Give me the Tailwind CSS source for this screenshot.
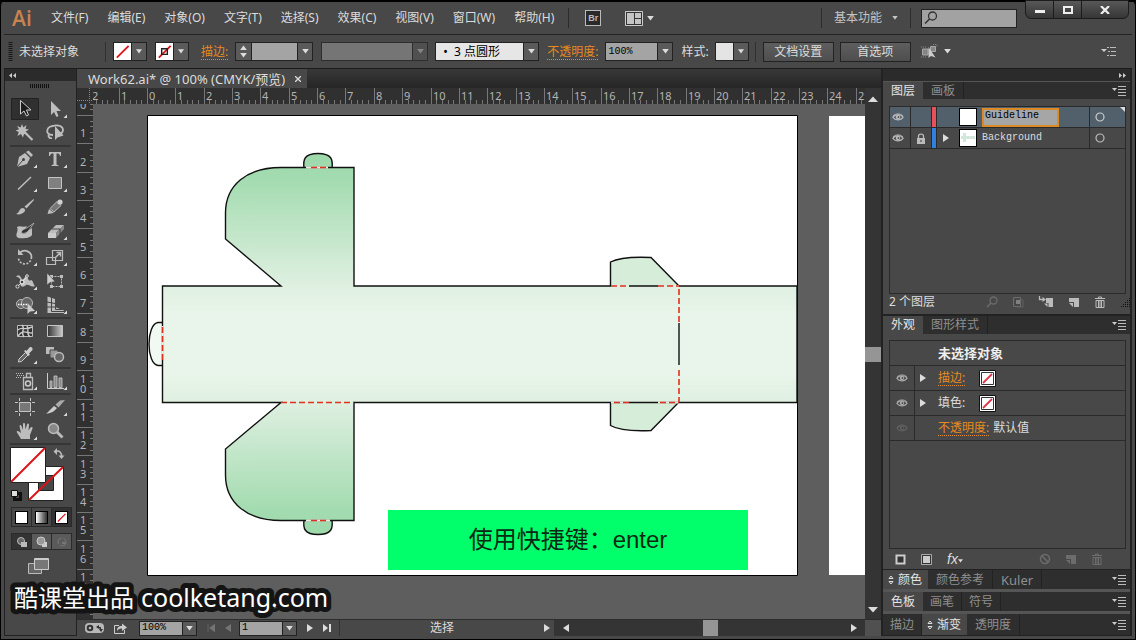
<!DOCTYPE html>
<html lang="zh-CN">
<head>
  <meta charset="UTF-8">
  <meta name="viewport" content="width=device-width, initial-scale=1.0">
  <title>Work62.ai</title>
  <script src="https://cdn.jsdelivr.net/npm/@tailwindcss/browser@4"></script>
</head>
<body class="h-screen overflow-hidden bg-black text-[12px] leading-4 text-[#dcdcdc] font-['Noto_Sans','Noto_Sans_CJK_SC',sans-serif]">

  <!-- Shared icons -->
  <svg class="hidden">
    <symbol id="down" viewBox="0 0 8 6"><path d="M0 0H8L4 5.5Z" fill="currentColor"/></symbol>
    <symbol id="none" viewBox="0 0 18 18"><path d="M0 0H18V18H0Z" fill="#fff"/><path d="M3 15.5L15.5 3" stroke="#e0141a" stroke-width="2"/></symbol>
    <symbol id="none-small" viewBox="0 0 17 17"><path d="M.5.5H16.5V16.5H.5Z" fill="#fff" stroke="#111"/><path d="M2.5 2.5H14.5V14.5H2.5Z" fill="#fff" stroke="#333"/><path d="M4 13L13 4" stroke="#e0344a" stroke-width="1.8"/></symbol>
    <symbol id="eye" viewBox="0 0 14 10"><path d="M1 5.5C3 1.5 10.500 1 13 5.500C10.500 9 4 9.500 1 5.500Z" fill="none" stroke="currentColor" stroke-width="1.300"/><circle cx="7" cy="5" r="2.600" fill="currentColor"/><circle cx="7.500" cy="5" r="1" fill="#333"/><path d="M1 4C4 .5 10 .5 13 4" fill="none" stroke="currentColor" stroke-width="1"/></symbol>
    <symbol id="menu" viewBox="0 0 14 10"><path d="M0 2H5L2.500 5Z" fill="#ccc"/><path d="M6 .5H14M6 3.500H14M6 6.500H14M6 9.500H14" stroke="#bbb"/></symbol>
    <symbol id="corner" viewBox="0 0 30 24"><path d="M27 17.500V21H23.500Z" fill="#ddd"/></symbol>
    <symbol id="right" viewBox="0 0 6 8"><path d="M0 0L6 4L0 8Z" fill="currentColor"/></symbol>
    <symbol id="page" viewBox="0 0 12 12"><path d="M1 2H11V11H6V6H1Z" fill="currentColor"/><path d="M1 7H5V11Z" fill="currentColor"/></symbol>
    <symbol id="trash" viewBox="0 0 12 12"><path d="M4.500 2V1H7.500V2M1 2.500H11M2 4.500H10V11.500H2ZM4.500 5V11M7.500 5V11M6 5V11" fill="none" stroke="currentColor"/></symbol>
    <symbol id="updown" viewBox="0 0 6 10"><path d="M1 3.500L3 1L5 3.500M1 6.500L3 9L5 6.500M1 3.500H5M1 6.500H5" fill="none" stroke="#ddd"/></symbol>
  </svg>

  <div class="flex h-full flex-col rounded-t-md bg-[#484848] border-x border-b border-black">

    <!-- Menu bar -->
    <header class="flex h-[34px] shrink-0 items-center border-t-2 border-black pl-[11px] pr-1.5">
      <h1 class="w-[39px] text-[21px] leading-7 font-semibold text-[#c98250] font-['Open_Sans',sans-serif]">Ai</h1>
      <nav class="flex gap-[19px] whitespace-nowrap">
        <a href="#">文件(F)</a>
        <a href="#">编辑(E)</a>
        <a href="#">对象(O)</a>
        <a href="#">文字(T)</a>
        <a href="#">选择(S)</a>
        <a href="#">效果(C)</a>
        <a href="#">视图(V)</a>
        <a href="#">窗口(W)</a>
        <a href="#">帮助(H)</a>
      </nav>
      <div class="ml-3.5 h-5 border-l border-[#2c2c2c]"></div>
      <button class="ml-4 h-4 w-4 border border-[#bbb] bg-[#2a2a2a] text-[9px] leading-3 font-bold text-[#bbb] font-['Liberation_Sans',sans-serif]">Br</button>
      <button class="ml-6 flex items-center gap-1" aria-label="排列文档">
        <svg class="h-[15px] w-[18px]" viewBox="0 0 18 15"><path d="M.5.5H17.500V14.500H.5Z" fill="#333" stroke="#ccc"/><path d="M2 2H9V13H2ZM10 2H16V7H10ZM10 8H16V13H10Z" fill="#c4c4c4"/></svg>
        <svg class="h-[5px] w-[7px]"><use href="#down"/></svg>
      </button>
      <div class="ml-auto h-5 border-l border-[#2c2c2c]"></div>
      <button class="ml-3 flex items-center gap-2.5 text-[#c4c4c4]">基本功能 <svg class="h-1 w-1.5"><use href="#down"/></svg></button>
      <div class="ml-3 h-5 border-l border-[#2c2c2c]"></div>
      <label class="ml-2.5 flex h-[19px] w-24 items-center border border-[#222] bg-[#a2a2a2] px-0.5">
        <svg class="h-[14px] w-[14px] shrink-0" viewBox="0 0 14 14"><circle cx="8.500" cy="5" r="4" fill="none" stroke="#333" stroke-width="1.300"/><path d="M5.500 8L1 12.500" stroke="#333" stroke-width="1.600"/></svg>
        <input class="w-full min-w-0 outline-none" type="search" aria-label="搜索">
      </label>
      <div class="ml-2 flex h-[19px] self-start -mt-0.5 divide-x divide-[#1c1c1c] rounded-b-md border border-[#1c1c1c] bg-linear-to-b from-[#585858] to-[#363636]">
        <button class="flex w-7 items-center justify-center" aria-label="最小化"><span class="mt-1 h-[3px] w-2.5 bg-[#eee]"></span></button>
        <button class="flex w-7 items-center justify-center" aria-label="最大化"><span class="h-2 w-2.5 border-2 border-[#eee]"></span></button>
        <button class="flex w-[46px] items-center justify-center" aria-label="关闭"><svg class="h-2 w-2.5" viewBox="0 0 10 8"><path d="M1 0L9 8M9 0L1 8" stroke="#eee" stroke-width="2.200"/></svg></button>
      </div>
    </header>

    <!-- Control bar -->
    <section class="mx-[3px] flex h-[34px] shrink-0 items-center border-t border-[#222] whitespace-nowrap">
      <svg class="ml-1 h-5 w-[5px]" viewBox="0 0 5 20"><path d="M2.500 0V20" stroke="#181818" stroke-width="4" stroke-dasharray="1 1"/></svg>
      <span class="ml-1.5 w-[86px]">未选择对象</span>
      <div class="h-5 border-l border-[#303030]"></div>
      <button class="ml-[7px] flex h-[19px] items-center border border-[#222] bg-[#5a5a5a]" aria-label="填色">
        <svg class="h-[17px] w-[18px] border-r border-[#222]"><use href="#none"/></svg>
        <svg class="mx-1 h-[5px] w-1.5"><use href="#down"/></svg>
      </button>
      <button class="ml-2 flex h-[19px] items-center border border-[#222] bg-[#5a5a5a]" aria-label="描边颜色">
        <svg class="h-[17px] w-[18px] border-r border-[#222]" viewBox="0 0 18 18"><use href="#none"/><path d="M6 6H12V12H6Z" fill="none" stroke="#222" stroke-width="1.500"/></svg>
        <svg class="mx-1 h-[5px] w-1.5"><use href="#down"/></svg>
      </button>
      <label for="stroke" class="ml-3 border-b border-dotted border-[#e78a1f] text-[#e78a1f] leading-[15px]">描边:</label>
      <div class="ml-[7px] flex h-[19px] w-[78px] border border-[#222] bg-[#5a5a5a]">
        <div class="flex w-4 flex-col items-center justify-around border-r border-[#222]">
          <button aria-label="增加"><svg class="h-[5px] w-[7px] rotate-180"><use href="#down"/></svg></button>
          <button aria-label="减少"><svg class="h-[5px] w-[7px]"><use href="#down"/></svg></button>
        </div>
        <input id="stroke" class="w-0 min-w-0 flex-1 bg-[#a4a4a4]">
        <button class="flex w-[15px] items-center justify-center border-l border-[#222]" aria-label="描边粗细"><svg class="h-[5px] w-[7px]"><use href="#down"/></svg></button>
      </div>
      <div class="ml-2 flex h-[19px] w-[107px] border border-[#2e2e2e] bg-[#505050]">
        <input class="w-0 min-w-0 flex-1 bg-[#757575]" aria-label="画笔定义" disabled>
        <button class="flex w-[15px] items-center justify-center border-l border-[#2e2e2e] text-[#858585]" aria-label="画笔列表" disabled><svg class="h-[5px] w-[7px]"><use href="#down"/></svg></button>
      </div>
      <div class="ml-[7px] flex h-[19px] w-[104px] border border-[#222] bg-[#5a5a5a]">
        <select class="w-0 min-w-0 flex-1 appearance-none bg-[#e6e6e6] pl-[7px] text-black" aria-label="画笔"><option>•&nbsp; 3 点圆形</option></select>
        <span class="flex w-[15px] items-center justify-center border-l border-[#222]"><svg class="h-[5px] w-[7px]"><use href="#down"/></svg></span>
      </div>
      <label for="opacity" class="ml-2 border-b border-dotted border-[#e78a1f] text-[#e78a1f] leading-[15px]">不透明度:</label>
      <div class="ml-[7px] flex h-[19px] w-[68px] border border-[#222] bg-[#5a5a5a]">
        <input id="opacity" value="100%" class="w-0 min-w-0 flex-1 bg-[#a4a4a4] pl-0.5 text-[10px] text-black font-['Liberation_Mono',monospace]">
        <button class="flex w-[15px] items-center justify-center border-l border-[#222]" aria-label="不透明度列表"><svg class="h-[5px] w-[7px]"><use href="#down"/></svg></button>
      </div>
      <span class="ml-2">样式:</span>
      <button class="ml-1.5 flex h-[19px] items-center border border-[#222] bg-[#5a5a5a]" aria-label="样式">
        <span class="h-[17px] w-[18px] border-r border-[#222] bg-[#e4e4e4]"></span>
        <svg class="mx-1 h-[5px] w-1.5"><use href="#down"/></svg>
      </button>
      <div class="ml-1.5 h-5 border-l border-[#303030]"></div>
      <button class="ml-[7px] h-5 w-[71px] border border-[#222] bg-linear-to-b from-[#5e5e5e] to-[#4e4e4e]">文档设置</button>
      <button class="ml-1.5 h-5 w-[71px] border border-[#222] bg-linear-to-b from-[#5e5e5e] to-[#4e4e4e]">首选项</button>
      <button class="ml-2.5 flex items-center gap-1.5" aria-label="选择类似的对象">
        <svg class="h-4 w-[17px]" viewBox="0 0 17 16"><path d="M1.500 5H7V11H1.500ZM9.500 2.500H14.500V7.500H9.500Z" fill="#858585" stroke="#a8a8a8"/><path d="M0 3H5M0 13H5M12 .5H16V3" stroke="#888" stroke-dasharray="1 1" fill="none"/><path d="M7.500 3V14L10 12L14.500 13.500Z" fill="#ccc"/></svg>
        <svg class="h-[5px] w-[7px]"><use href="#down"/></svg>
      </button>
      <button class="ml-auto mr-4" aria-label="控制栏菜单"><svg class="h-[9px] w-[15px]" viewBox="0 0 15 9"><path d="M0 2H6L3 5Z" fill="#ccc"/><path d="M6 .5H8M9 .5H15M7 4.500H9M10 4.500H15M6 8.500H8M9 8.500H15" stroke="#bbb"/></svg></button>
    </section>

    <main class="mx-[3px] mb-[3px] flex min-h-0 flex-1 border-t border-[#1c1c1c]">

      <!-- Tool panel -->
      <aside class="flex w-[73px] shrink-0 flex-col border-x border-b border-[#222]">
        <div class="flex h-3 shrink-0 items-center bg-[#2b2b2b] pl-1"><svg class="h-[5px] w-[7px]" viewBox="0 0 7 5"><path d="M3 0V5L0 2.500ZM7 0V5L4 2.500Z" fill="#ccc"/></svg></div>
        <svg class="mt-[3px] ml-[25px] h-1 w-5 shrink-0" viewBox="0 0 20 4"><path d="M0 2H20" stroke="#111" stroke-width="4" stroke-dasharray="1 1"/></svg>
        <div class="mt-[9px] flex flex-col px-[5px] text-[#bdbdbd] [&_svg]:h-6 [&_svg]:w-[30px]">
          <div class="grid grid-cols-[30px_30px] border-b-2 border-[#363636]">
            <button class="h-6" aria-label="选择工具"><svg viewBox="0 0 30 24"><path d="M1.500 1.500H28.500V22.500H1.500Z" fill="#303030" stroke="#222"/><path d="M10.500 3.500V17L14 14L16.500 19L18.500 18L16.500 13L21 13Z" fill="#1c1c1c" stroke="#ccc"/></svg></button>
            <button class="h-6" aria-label="直接选择工具"><svg viewBox="0 0 30 24"><path d="M11 4V18L14 15L16.500 20L18.500 19L16.500 14H21Z" fill="currentColor"/><use href="#corner"/></svg></button>
            <button class="h-6" aria-label="魔棒工具"><svg viewBox="0 0 30 24"><path d="M12 3L13.300 6.500L16.500 4L15.500 8L19 8.500L15.800 10.500L18 13.500L14 13L13 16.500L11 13L7.500 15L8.700 11L5.500 9.500L9 8.300L7 5L10.700 6.500Z" fill="currentColor"/><path d="M16 12.500L22.500 19" stroke="currentColor" stroke-width="2.200"/></svg></button>
            <button class="h-6" aria-label="套索工具"><svg viewBox="0 0 30 24"><path d="M13 14C8 14 6.500 11.500 7.500 8.500C9 4 20 3 22.500 7C24 10 22 12 20 13M10 13C7 14 9 18 12 17" fill="none" stroke="currentColor" stroke-width="1.800"/><path d="M15 5V19L17.500 16.500L23.500 14.500Z" fill="currentColor"/></svg></button>
          </div>
          <div class="grid grid-cols-[30px_30px] border-b-2 border-[#363636]">
            <button class="h-6" aria-label="钢笔工具"><svg viewBox="0 0 30 24"><path d="M7 20L9 10L15 6L20 11L17 17Z" fill="currentColor"/><path d="M16 5L18.500 3.500L23 8L21 10Z" fill="currentColor"/><path d="M7 20L13 13" stroke="#444"/><circle cx="13.500" cy="12.500" r="1.500" fill="#444"/><use href="#corner"/></svg></button>
            <button class="h-6" aria-label="文字工具"><svg viewBox="0 0 30 24"><path d="M9 5H21V9H20C19.500 7 19 6.500 16.500 6.500V17C16.500 18 17 18 18.500 18.300V19H11.500V18.300C13 18 13.500 18 13.500 17V6.500C11 6.500 10.500 7 10 9H9Z" fill="currentColor"/><use href="#corner"/></svg></button>
            <button class="h-6" aria-label="直线段工具"><svg viewBox="0 0 30 24"><path d="M8 18.500L21 6" stroke="currentColor" stroke-width="1.500"/><use href="#corner"/></svg></button>
            <button class="h-6" aria-label="矩形工具"><svg viewBox="0 0 30 24"><path d="M8.500 6.500H21.500V17.500H8.500Z" fill="#808080" stroke="#c4c4c4"/><use href="#corner"/></svg></button>
            <button class="h-6" aria-label="画笔工具"><svg viewBox="0 0 30 24"><path d="M14.500 11.500L23.500 4L24 5L16.500 13.500Z" fill="currentColor"/><path d="M6 19C9 18 9 15 11 13.500C13 12 16 14 15 16C13 19 9 20 6 19Z" fill="currentColor"/></svg></button>
            <button class="h-6" aria-label="铅笔工具"><svg viewBox="0 0 30 24"><path d="M7.500 19L9 14L14 18Z" fill="currentColor"/><path d="M10 13.500L17 6.500L21 10.500L14 17Z" fill="#777" stroke="#bbb"/><circle cx="20" cy="7" r="2.600" fill="#d0d0d0"/><use href="#corner"/></svg></button>
            <button class="h-6" aria-label="斑点画笔工具"><svg viewBox="0 0 30 24"><path d="M7 8C10 6 13 9 17 7L14 12C11 15 15 16 18 12L22 9V16C20 20 8 20 7 18C5 14 9 13 7 8Z" fill="currentColor"/><path d="M11 14C12 10 15 10 17 9L24 4L19 11C17 14 14 15 11 14Z" fill="#333" stroke="#bbb" stroke-width=".8"/></svg></button>
            <button class="h-6" aria-label="橡皮擦工具"><svg viewBox="0 0 30 24"><path d="M8 14L16 6H24L16 14Z" fill="#bbb"/><path d="M8 14H16V19H8Z" fill="#ccc"/><path d="M16 14L24 6V10L16 19Z" fill="#888"/><path d="M12 10H20L20 15" fill="none" stroke="#444"/><use href="#corner"/></svg></button>
          </div>
          <div class="grid grid-cols-[30px_30px] border-b-2 border-[#363636]">
            <button class="h-6" aria-label="旋转工具"><svg viewBox="0 0 30 24"><path d="M10 7.500C15 3.500 21.500 7 21.500 12" fill="none" stroke="currentColor" stroke-width="1.700"/><path d="M21.500 12C21 21 9 21 8.500 13" fill="none" stroke="currentColor" stroke-width="1.700" stroke-dasharray="2 1.500"/><path d="M8 4V10H13.500Z" fill="currentColor"/><use href="#corner"/></svg></button>
            <button class="h-6" aria-label="比例缩放工具"><svg viewBox="0 0 30 24"><path d="M12.500 5.500H22.500V15.500H12.500ZM6.500 12.500H15.500V19.500H6.500Z" fill="none" stroke="currentColor" stroke-width="1.200"/><path d="M15.500 12.500L20 8M16.500 7.500H20.500V11.500" fill="none" stroke="currentColor" stroke-width="1.500"/><use href="#corner"/></svg></button>
            <button class="h-6" aria-label="宽度工具"><svg viewBox="0 0 30 24"><path d="M6 8C9 4 11 8 12 11C15 9 16 5 17 7C18 10 19 13 21 11C23 11 23 15 25 17C21 19 19 15 16 16C12 20 9 16 11 13C10 9 9 8 6 8Z" fill="currentColor"/><path d="M7 18L18 7" stroke="#ddd"/><circle cx="7.500" cy="17.500" r="1.600" fill="#444" stroke="#ddd"/><circle cx="12" cy="13" r="2" fill="#444" stroke="#fff"/><circle cx="17" cy="7" r="1.300" fill="#444" stroke="#ddd"/><use href="#corner"/></svg></button>
            <button class="h-6" aria-label="自由变换工具"><svg viewBox="0 0 30 24"><path d="M11.500 7.500H21.500V17.500H11.500Z" fill="none" stroke="currentColor" stroke-dasharray="2 1"/><path d="M10 6H13V9H10ZM20 6H23V9H20ZM20 16H23V19H20ZM10 16H13V19H10Z" fill="currentColor"/><path d="M7 4V16L10 13.500L15 12.500Z" fill="#ccc" stroke="#444" stroke-width=".5"/></svg></button>
            <button class="h-6" aria-label="形状生成器工具"><svg viewBox="0 0 30 24"><circle cx="11" cy="11" r="4.500" fill="#666" stroke="#bbb"/><circle cx="17" cy="10" r="5.500" fill="#666" stroke="#bbb"/><path d="M8 11.500H18" stroke="#fff" stroke-width="1.500" stroke-dasharray="1.500 1"/><path d="M17.500 10V21L20 18.500L25 18Z" fill="#ccc"/><use href="#corner"/></svg></button>
            <button class="h-6" aria-label="透视网格工具"><svg viewBox="0 0 30 24"><path d="M7.500 3.500L15 6V14L24 17.500V20H7.500Z" fill="currentColor"/><path d="M7 9L15 10.500M7 14H15M11.500 4V18.500H24M15.500 14V16.500H22" stroke="#444" fill="none"/><use href="#corner"/></svg></button>
          </div>
          <div class="grid grid-cols-[30px_30px] border-b-2 border-[#363636]">
            <button class="h-6" aria-label="网格工具"><svg viewBox="0 0 30 24"><path d="M7.500 6.500H22.500V17.500H7.500Z" fill="#333" stroke="#bbb"/><path d="M8 11C12 7 14 12 22 8M8 17C13 10 16 14 22 14M12 6C16 10 10 13 14 18M17 7C20 11 15 13 20 18" fill="none" stroke="#ccc" stroke-width="1.400"/></svg></button>
            <button class="h-6" aria-label="渐变工具"><svg viewBox="0 0 30 24"><defs><linearGradient id="g1"><stop stop-color="#333"/><stop offset="1" stop-color="#ccc"/></linearGradient></defs><path d="M7.500 6.500H22.500V17.500H7.500Z" fill="url(#g1)" stroke="#c4c4c4"/></svg></button>
            <button class="h-6" aria-label="吸管工具"><svg viewBox="0 0 30 24"><path d="M8.500 19L9 16L15.500 9.500L18 12L11.500 18.500Z" fill="#666" stroke="#ccc"/><path d="M14 8L18.500 13L20 11.500L19 10.500L22.500 7C23 4.500 21 3.500 19.500 4.500L16.500 8L15.500 7Z" fill="#ccc"/><use href="#corner"/></svg></button>
            <button class="h-6" aria-label="混合工具"><svg viewBox="0 0 30 24"><path d="M6 4H14V11H6Z" fill="#bbb"/><path d="M10 7H18V15H10Z" fill="#999" stroke="#444"/><circle cx="19" cy="14" r="4.500" fill="#666" stroke="#bbb" stroke-width="1.500"/></svg></button>
          </div>
          <div class="grid grid-cols-[30px_30px] border-b-2 border-[#363636]">
            <button class="h-6" aria-label="符号喷枪工具"><svg viewBox="0 0 30 24"><path d="M13.500 8.500H22.500V20.500H13.500ZM16.500 4.500H20.500V8.500H16.500Z" fill="none" stroke="#bbb" stroke-width="1.300"/><circle cx="18" cy="14.500" r="2.500" fill="none" stroke="#ccc" stroke-width="1.500"/><path d="M6 4.500H14M7 6.500H14M6 8.500H12" stroke="#bbb" stroke-dasharray="1 1"/><use href="#corner"/></svg></button>
            <button class="h-6" aria-label="柱形图工具"><svg viewBox="0 0 30 24"><path d="M7.500 4V19.500H24" fill="none" stroke="#ccc"/><path d="M10 12H12V18.500H10ZM14 7H17V18.500H14ZM19 9H22V18.500H19Z" fill="#888" stroke="#ccc" stroke-width=".8"/><use href="#corner"/></svg></button>
          </div>
          <div class="grid grid-cols-[30px_30px] border-b-2 border-[#363636]">
            <button class="h-6" aria-label="画板工具"><svg viewBox="0 0 30 24"><path d="M9.500 7.500H20.500V16.500H9.500Z" fill="#777" stroke="#c4c4c4"/><path d="M9.500 3V6M20.500 3V6M9.500 18V21M20.500 18V21M5 7.500H8M22 7.500H25M5 16.500H8M22 16.500H25" stroke="#c4c4c4"/></svg></button>
            <button class="h-6" aria-label="切片工具"><svg viewBox="0 0 30 24"><path d="M6 19L14 11L17 13C14 17 10 18 6 19Z" fill="#ccc"/><path d="M15.500 9.500L20 5.500L25 5L18.500 12.500Z" fill="#aaa"/><use href="#corner"/></svg></button>
            <button class="h-6" aria-label="抓手工具"><svg viewBox="0 0 30 24"><path d="M11 20L7 13.500C6 12 8 11.500 9 12.500L11 14L9.500 7C9.500 5.500 11 5.500 11.500 7L13 11V5C13 3.500 15 3.500 15 5L15.500 10.500L17 5.500C17.500 4 19 4.500 19 6L18.500 11.500L20.500 8.500C21.500 7.500 23 8 22.500 9.500L20 16V20Z" fill="currentColor"/><use href="#corner"/></svg></button>
            <button class="h-6" aria-label="缩放工具"><svg viewBox="0 0 30 24"><circle cx="13.500" cy="9.500" r="5" fill="#888" stroke="#bbb" stroke-width="1.500"/><path d="M17 13L22.500 18.500" stroke="#bbb" stroke-width="2.800"/></svg></button>
          </div>
        </div>

        <!-- Fill, stroke and drawing modes -->
        <svg class="ml-[5px] h-[58px] w-[60px] shrink-0" viewBox="10 445 60 58">
          <path d="M28.500 466.500H63.500V500.500H28.500Z" fill="#fff" stroke="#222"/><path d="M38.500 475.500H53.500V490.500H38.500Z" fill="#484848" stroke="#222"/><path d="M29 500L63 467" stroke="#d8141a" stroke-width="2"/>
          <path d="M10.500 447.500H45.500V482.500H10.500Z" fill="#fff" stroke="#222"/><path d="M11 482L45 448" stroke="#d8141a" stroke-width="2"/>
          <path d="M55.500 451.500C59 450 62 452 61.500 457" fill="none" stroke="#bbb" stroke-width="1.500"/><path d="M57 448V455L53.500 451.500ZM58.500 455.500H64.500L61.500 459Z" fill="#bbb"/>
          <path d="M14.500 493.500H20.500V499.500H14.500Z" fill="none" stroke="#111" stroke-width="3"/><path d="M11.500 490.500H17.500V496.500H11.500Z" fill="#ddd" stroke="#111"/>
        </svg>
        <div class="mt-1 ml-[6px] flex h-5 w-[61px] shrink-0 divide-x divide-[#2a2a2a] border border-[#2a2a2a]">
          <button class="flex flex-1 items-center justify-center" aria-label="颜色"><span class="h-[13px] w-[13px] border border-black bg-white"></span></button>
          <button class="flex flex-1 items-center justify-center" aria-label="渐变"><span class="h-[13px] w-[13px] border border-black bg-linear-to-r from-white to-[#333]"></span></button>
          <button class="flex flex-1 items-center justify-center bg-[#333]" aria-label="无"><svg class="h-[13px] w-[13px] border border-black"><use href="#none"/></svg></button>
        </div>
        <div class="mt-1.5 ml-[6px] flex h-[17px] w-[61px] shrink-0 divide-x divide-[#2a2a2a] border border-[#2a2a2a] bg-[#5a5a5a] [&_svg]:h-3 [&_svg]:w-3">
          <button class="flex flex-1 items-center justify-center bg-[#333]" aria-label="正常绘图"><svg viewBox="0 0 12 12"><circle cx="5" cy="5" r="3.500" fill="#666" stroke="#bbb"/><path d="M5 6H11V11H5Z" fill="#bbb"/></svg></button>
          <button class="flex flex-1 items-center justify-center" aria-label="背面绘图"><svg viewBox="0 0 12 12"><path d="M6 6H11V11H6Z" fill="#ccc"/><circle cx="5" cy="5" r="4" fill="#999" stroke="#ccc"/></svg></button>
          <button class="flex flex-1 items-center justify-center" aria-label="内部绘图"><svg viewBox="0 0 12 12"><circle cx="6" cy="6" r="4" fill="none" stroke="#777" stroke-dasharray="8 2"/><path d="M6 6H9V8H6Z" fill="#777"/></svg></button>
        </div>
        <button class="mt-2 ml-[23px] h-[17px] w-[21px] shrink-0" aria-label="更改屏幕模式"><svg viewBox="0 0 21 17"><path d="M.5 5.500H13.500V15.500H.5Z" fill="#666" stroke="#bbb"/><path d="M6.500.5H20.500V11.500H6.500Z" fill="#777" stroke="#ccc"/><path d="M6 1.500H21" stroke="#ccc"/></svg></button>
      </aside>

      <!-- Document window -->
      <section class="flex min-w-0 flex-1 flex-col">
        <div class="flex h-[19px] shrink-0 bg-linear-to-b from-[#383838] to-[#262626]">
          <div class="flex w-[230px] items-center justify-between bg-[#484848] pl-[11px] pr-1.5 whitespace-nowrap">
            <span class="text-[13px]">Work62.ai* @ 100% (CMYK/预览)</span>
            <button aria-label="关闭文档"><svg class="h-1.5 w-1.5" viewBox="0 0 6 6"><path d="M0 0L6 6M6 0L0 6" stroke="#ddd" stroke-width="1.300"/></svg></button>
          </div>
        </div>
        <div class="flex min-h-0 flex-1">
          <div class="grid min-w-0 flex-1 grid-cols-[16px_minmax(0,1fr)] grid-rows-[16px_minmax(0,1fr)] overflow-hidden bg-[#303030]">
            <svg class="h-4 w-4" viewBox="0 0 16 16"><path d="M0 12.500H16M12.500 0V16" stroke="#888" stroke-dasharray="1 1"/></svg>
            <svg id="rulerTop" class="h-4 w-full text-[11px]"></svg>
            <svg id="rulerLeft" class="h-full w-4 text-[11px]"></svg>
            <div class="relative overflow-hidden bg-[#5e5e5e]">
              <!-- Artboards, coordinates in window pixels -->
              <svg class="absolute top-0 left-0 h-[515px] w-[772px]" viewBox="93 104 772 515">
                <defs>
                  <linearGradient id="art" gradientUnits="userSpaceOnUse" x1="0" y1="153" x2="0" y2="535">
                    <stop offset="0" stop-color="#9dd9ab"/>
                    <stop offset=".06" stop-color="#a2dbaf"/>
                    <stop offset=".35" stop-color="#dff0e1"/>
                    <stop offset=".42" stop-color="#e9f5ea"/>
                    <stop offset=".58" stop-color="#e9f5ea"/>
                    <stop offset=".65" stop-color="#dff0e1"/>
                    <stop offset=".94" stop-color="#a2dbaf"/>
                    <stop offset="1" stop-color="#9dd9ab"/>
                  </linearGradient>
                </defs>
                <path d="M147.500 115.500H797.500V575.500H147.500Z" fill="#fff" stroke="#000"/>
                <path d="M829 116H870V575H829Z" fill="#fff"/>
                <g fill="url(#art)" stroke="#111" stroke-width="1.400">
                  <path d="M304 168C303 160 304 153.500 318 153.500S333 160 332 168"/>
                  <path d="M304 520C303 528 304 534.500 318 534.500S333 528 332 520"/>
                  <path d="M162.500 322.500H158C146 324 146 364 158 365.500H162.500" fill="#f2f8f2"/>
                  <path d="M610.500 286V262C620 257 640 257 651 257.500L679 286" fill="#d6eed9"/>
                  <path d="M610.500 402V425.500C620 431 640 431 651 430.500L679 402" fill="#d6eed9"/>
                  <path d="M162.500 286H281L225.500 239V213C225.500 185 247 167.500 281 167.500H354V286H797V402.500H354V520.500H281C247 520.500 225.500 503 225.500 475V449L281 402.500H162.500Z"/>
                  <path d="M679 323V365"/>
                </g>
                <g fill="none" stroke="#e6efe6" stroke-width="2">
                  <path d="M306 167.500H328M306 520.500H330M162.500 326V360M611 286H629M658 286H679M611 402.500H629M658 402.500H679"/>
                </g>
                <g fill="none" stroke="#e0301e" stroke-width="1.600" stroke-dasharray="6 3">
                  <path d="M311 167.500H328M311 520.500H328M162.500 327V361M281 402.500H354M611 286H629M658 286H679M614 402.500H629M660 402.500H679M679 289V322M679 370V402"/>
                </g>
              </svg>
              <p class="absolute top-[406px] left-[295px] w-[360px] bg-[#00ff6a] py-[15px] text-center text-[24px] leading-[30px] text-[#0b2a14] font-['Liberation_Sans','Noto_Sans_CJK_SC',sans-serif]">使用快捷键：enter</p>
            </div>
          </div>
          <!-- Vertical scroll bar -->
          <div class="flex w-4 shrink-0 flex-col items-center bg-[#343434] pt-2 pb-1.5">
            <button class="leading-none" aria-label="向上滚动"><svg class="h-1.5 w-2.5 rotate-180" viewBox="0 0 8 6" preserveAspectRatio="none"><use href="#down"/></svg></button>
            <div class="flex w-full flex-1 items-center"><div class="h-[15px] w-full bg-[#959595]"></div></div>
            <button class="leading-none" aria-label="向下滚动"><svg class="h-1.5 w-2.5" viewBox="0 0 8 6" preserveAspectRatio="none"><use href="#down"/></svg></button>
          </div>
        </div>

        <!-- Status bar -->
        <div class="flex h-[17px] shrink-0 items-center border-t border-[#2c2c2c]">
          <button class="ml-2 h-2.5 w-[19px] rounded-sm bg-[#b8b8b8]" aria-label="同步设置"><svg viewBox="0 0 19 10"><circle cx="5" cy="5" r="2.300" fill="none" stroke="#333" stroke-width="2"/><path d="M11 4L14 2V6ZM13 4H16V7M18 6L16 9L14 6Z" fill="#333"/></svg></button>
          <button class="ml-2.5 h-[11px] w-[13px]" aria-label="共享"><svg viewBox="0 0 13 11"><path d="M5 2.500H.5V10.500H10.500V7" fill="none" stroke="#ccc"/><path d="M3 8C3 4 5 3 8 3V.5L13 4.500L8 8V5.500C6 5.500 4 6 3 8Z" fill="#ccc"/></svg></button>
          <div class="ml-3 flex h-[15px] w-[58px] items-center border border-[#222] bg-[#5a5a5a]">
            <select class="h-full w-0 min-w-0 flex-1 appearance-none bg-[#a4a4a4] pl-0.5 text-[10px] leading-3 text-black font-['Liberation_Mono',monospace]" aria-label="缩放"><option>100%</option></select>
            <span class="flex h-full w-[14px] items-center justify-center border-l border-[#222]"><svg class="h-[5px] w-[7px]"><use href="#down"/></svg></span>
          </div>
          <button class="ml-2.5" aria-label="首项"><svg class="h-2 w-2" viewBox="0 0 8 8"><path d="M1 0V8M8 0V8L2.500 4Z" fill="#747474" stroke="#747474" stroke-width=".6"/></svg></button>
          <button class="ml-2.5" aria-label="上一项"><svg class="h-2 w-1.5 rotate-180 text-[#747474]"><use href="#right"/></svg></button>
          <div class="ml-2 flex h-[15px] w-[58px] items-center border border-[#222] bg-[#5a5a5a]">
            <select class="h-full w-0 min-w-0 flex-1 appearance-none bg-[#a4a4a4] pl-0.5 text-[10px] leading-3 text-black font-['Liberation_Mono',monospace]" aria-label="画板导航"><option>1</option></select>
            <span class="flex h-full w-[14px] items-center justify-center border-l border-[#222]"><svg class="h-[5px] w-[7px]"><use href="#down"/></svg></span>
          </div>
          <button class="ml-2.5" aria-label="下一项"><svg class="h-2 w-1.5"><use href="#right"/></svg></button>
          <button class="ml-2.5" aria-label="末项"><svg class="h-2 w-2" viewBox="0 0 8 8"><path d="M0 0V8L5 4ZM6 0H8V8H6Z" fill="#ddd"/></svg></button>
          <div class="ml-2 flex h-full w-[216px] items-center border-x border-[#333]">
            <span class="flex-1 text-center">选择</span>
            <button class="mr-1" aria-label="状态菜单"><svg class="h-2 w-1.5"><use href="#right"/></svg></button>
          </div>
          <div class="flex h-full flex-1 items-center bg-[#343434] px-2">
            <button aria-label="向左滚动"><svg class="h-2 w-1.5 rotate-180"><use href="#right"/></svg></button>
            <div class="flex h-full flex-1 justify-center"><div class="h-full w-[15px] bg-[#959595]"></div></div>
            <button aria-label="向右滚动"><svg class="h-2 w-1.5"><use href="#right"/></svg></button>
          </div>
          <div class="h-full w-4 bg-[#505050]"></div>
        </div>
      </section>

      <!-- Panels -->
      <aside class="flex w-[251px] shrink-0 flex-col border-x-2 border-[#222]">
        <div class="flex h-3 shrink-0 items-center justify-end bg-[#2b2b2b] pr-1"><svg class="h-[5px] w-[7px]" viewBox="0 0 7 5"><path d="M0 0V5L3 2.500ZM4 0V5L7 2.500Z" fill="#ccc"/></svg></div>

        <section class="flex flex-col border-t border-[#555] border-b-2 border-b-[#222]">
          <div class="flex h-[17px] bg-[#2e2e2e] text-[#8f8f8f]">
            <button class="bg-[#484848] px-2 text-[#e4e4e4]">图层</button>
            <button class="border-r border-[#222] px-2">画板</button>
            <button class="ml-auto mr-1" aria-label="图层菜单"><svg class="h-2.5 w-3.5"><use href="#menu"/></svg></button>
          </div>
          <div class="ml-1.5 mr-1 mt-[7px] min-h-[188px] border border-[#2a2a2a]">
            <div class="relative flex h-[21px] items-center border-b border-[#2a2a2a] bg-[#52606c]">
              <button class="flex h-full w-[21px] items-center justify-center border-r border-[#2a2a2a] text-[#bbb]" aria-label="切换可视性"><svg class="mr-1 h-2.5 w-3"><use href="#eye"/></svg></button>
              <div class="h-full w-[21px] border-r border-[#2a2a2a]"></div>
              <div class="h-full w-[5px] border-r border-[#2a2a2a] bg-[#e9505a]"></div>
              <div class="w-[22px]"></div>
              <div class="h-[18px] w-[18px] border border-black bg-white"></div>
              <input value="Guideline" aria-label="图层名称" class="ml-[5px] h-[19px] w-[77px] border-2 border-[#dc8a26] bg-[#a6a6a6] pl-px pb-1 text-[10px] text-black outline-none font-['Liberation_Mono',monospace]">
              <div class="ml-auto flex h-full w-9 items-center border-l border-[#2a2a2a] pl-[5px]"><svg class="h-2.5 w-2.5" viewBox="0 0 10 10"><circle cx="5" cy="5" r="4" fill="none" stroke="#ccc" stroke-width="1.200"/></svg></div>
              <svg class="absolute top-0 right-0 h-[5px] w-[5px]" viewBox="0 0 5 5"><path d="M0 0H5V5Z" fill="#ddd"/></svg>
            </div>
            <div class="flex h-[21px] items-center border-b border-[#2a2a2a]">
              <button class="flex h-full w-[21px] items-center justify-center border-r border-[#2a2a2a] text-[#bbb]" aria-label="切换可视性"><svg class="mr-1 h-2.5 w-3"><use href="#eye"/></svg></button>
              <button class="flex h-full w-[21px] items-center justify-center border-r border-[#2a2a2a]" aria-label="切换锁定"><svg class="h-[11px] w-2" viewBox="0 0 8 11"><path d="M0 5H8V11H0Z" fill="#bbb"/><path d="M1.500 5V3C1.500.5 6.500.5 6.500 3V5" fill="none" stroke="#bbb" stroke-width="1.300"/><path d="M3.500 7H4.500V9H3.500Z" fill="#333"/></svg></button>
              <div class="h-full w-[5px] border-r border-[#2a2a2a] bg-[#2f80e0]"></div>
              <button class="flex w-[22px] justify-center pr-1" aria-label="展开"><svg class="h-2 w-1.5"><use href="#right"/></svg></button>
              <svg class="h-[18px] w-[18px] border border-black bg-white" viewBox="0 0 16 16"><path d="M1 6H3V3H6V6H15V9H6V12H3V9H1Z" fill="#d3e8da"/></svg>
              <span class="ml-[5px] text-[10px] font-['Liberation_Mono',monospace]">Background</span>
              <div class="ml-auto flex h-full w-9 items-center border-l border-[#2a2a2a] pl-[5px]"><svg class="h-2.5 w-2.5" viewBox="0 0 10 10"><circle cx="5" cy="5" r="4" fill="none" stroke="#bbb" stroke-width="1.200"/></svg></div>
            </div>
          </div>
          <div class="flex h-5 items-center pl-1.5 pb-1">
            <span>2 个图层</span>
            <div class="ml-auto flex items-center gap-3.5 text-[#bbb] [&_svg]:h-3 [&_svg]:w-3">
              <button aria-label="定位对象"><svg viewBox="0 0 12 12"><circle cx="7.500" cy="4.500" r="3.500" fill="none" stroke="#6c6c6c" stroke-width="1.300"/><path d="M5 7L1 11" stroke="#6c6c6c" stroke-width="1.500"/></svg></button>
              <button aria-label="建立剪切蒙版"><svg viewBox="0 0 12 12"><path d="M1.500 1.500H8.500V10.500H1.500Z" fill="none" stroke="#6c6c6c"/><path d="M4 4H8V8H4Z" fill="#808080"/><path d="M9 4H11V11H5" fill="none" stroke="#606060"/></svg></button>
              <button aria-label="创建新子图层"><svg class="w-4!" viewBox="0 0 16 12"><path d="M1.500 0V3.500H5" fill="none" stroke="currentColor" stroke-width="1.300"/><path d="M4.500 1L8 3.500L4.500 6ZM8 2H15V11H10.500V7H8Z" fill="currentColor"/><path d="M6 7.500H9.500V11Z" fill="currentColor"/></svg></button>
              <button aria-label="创建新图层"><svg><use href="#page"/></svg></button>
              <button aria-label="删除所选图层"><svg><use href="#trash"/></svg></button>
              <svg class="w-2.5!" viewBox="0 0 10 12"><path d="M9.500 2V12M7.500 4V12M5.500 6V12M3.500 8V12M1.500 10V12" stroke="#111" stroke-dasharray="1 1"/></svg>
            </div>
          </div>
        </section>

        <section class="flex min-h-0 flex-1 flex-col border-b border-[#222]">
          <div class="flex h-[18px] shrink-0 bg-[#2e2e2e] text-[#8f8f8f]">
            <button class="bg-[#484848] px-2 text-[#e4e4e4]">外观</button>
            <button class="border-r border-[#222] px-2">图形样式</button>
            <button class="ml-auto mr-1" aria-label="外观菜单"><svg class="h-2.5 w-3.5"><use href="#menu"/></svg></button>
          </div>
          <div class="ml-1.5 mr-1 mt-1.5 flex-1 border border-[#2a2a2a]">
            <div class="flex h-[25px] items-center border-b border-[#2a2a2a] pl-12 font-bold text-[13px] text-[#eee]">未选择对象</div>
            <div class="flex h-[25px] items-center border-b border-[#2a2a2a]">
              <button class="flex h-full w-[25px] items-center justify-center border-r border-[#2a2a2a] text-[#aaa]" aria-label="切换可视性"><svg class="h-2.5 w-3"><use href="#eye"/></svg></button>
              <button class="ml-[5px] w-[18px]" aria-label="展开"><svg class="h-2 w-1.5"><use href="#right"/></svg></button>
              <a href="#" class="border-b border-dotted border-[#e78a1f] leading-[15px] text-[#e78a1f]">描边:</a>
              <svg class="ml-3.5 h-[17px] w-[17px]"><use href="#none-small"/></svg>
            </div>
            <div class="flex h-[25px] items-center border-b border-[#2a2a2a]">
              <button class="flex h-full w-[25px] items-center justify-center border-r border-[#2a2a2a] text-[#aaa]" aria-label="切换可视性"><svg class="h-2.5 w-3"><use href="#eye"/></svg></button>
              <button class="ml-[5px] w-[18px]" aria-label="展开"><svg class="h-2 w-1.5"><use href="#right"/></svg></button>
              <span>填色:</span>
              <svg class="ml-3.5 h-[17px] w-[17px]"><use href="#none-small"/></svg>
            </div>
            <div class="flex h-[25px] items-center border-b border-[#2a2a2a]">
              <button class="flex h-full w-[25px] items-center justify-center border-r border-[#2a2a2a] text-[#606060]" aria-label="切换可视性"><svg class="h-2.5 w-3"><use href="#eye"/></svg></button>
              <a href="#" class="ml-[23px] border-b border-dotted border-[#e78a1f] leading-[15px] text-[#e78a1f]">不透明度:</a>
              <span class="ml-1">默认值</span>
            </div>
          </div>
          <div class="flex h-5 shrink-0 items-center gap-[15px] pl-3 pr-[27px]">
            <button aria-label="添加新描边"><svg class="h-[11px] w-[11px]" viewBox="0 0 11 11"><path d="M1.500 1.500H9.500V9.500H1.500Z" fill="#333" stroke="#ccc" stroke-width="2"/></svg></button>
            <button aria-label="添加新填色"><svg class="h-[11px] w-[11px]" viewBox="0 0 11 11"><path d="M.5.5H10.500V10.500H.5Z" fill="#333" stroke="#aaa"/><path d="M2 2H9V9H2Z" fill="#ccc"/></svg></button>
            <button class="flex items-end text-[14px] italic font-['Liberation_Sans',sans-serif]">fx<svg class="mb-1 h-1 w-[5px]"><use href="#down"/></svg></button>
            <div class="ml-auto flex gap-3.5 text-[#6c6c6c] [&_svg]:h-3 [&_svg]:w-3">
              <button aria-label="清除外观"><svg viewBox="0 0 12 12"><circle cx="6" cy="6" r="4.500" fill="none" stroke="currentColor" stroke-width="1.500"/><path d="M3 3L9 9" stroke="currentColor" stroke-width="1.500"/></svg></button>
              <button aria-label="复制所选项目"><svg><use href="#page"/></svg></button>
              <button aria-label="删除所选项目"><svg><use href="#trash"/></svg></button>
            </div>
          </div>
        </section>

        <!-- Collapsed panel groups -->
        <section class="flex h-[22px] shrink-0 border-b-[3px] border-[#555] bg-[#2e2e2e] text-[#8f8f8f]">
          <button class="flex items-center gap-1 bg-[#484848] pl-[5px] pr-1.5 text-[#e4e4e4]"><svg class="h-2.5 w-1.5"><use href="#updown"/></svg>颜色</button>
          <button class="border-r border-[#222] px-2">颜色参考</button>
          <button class="border-r border-[#222] px-2 text-[13px]">Kuler</button>
          <button class="ml-auto mr-1" aria-label="颜色菜单"><svg class="h-2.5 w-3.5"><use href="#menu"/></svg></button>
        </section>
        <section class="flex h-[22px] shrink-0 border-b-[3px] border-[#555] bg-[#2e2e2e] text-[#8f8f8f]">
          <button class="bg-[#484848] px-2 text-[#e4e4e4]">色板</button>
          <button class="border-r border-[#222] px-[7px]">画笔</button>
          <button class="border-r border-[#222] px-[7px]">符号</button>
          <button class="ml-auto mr-1" aria-label="色板菜单"><svg class="h-2.5 w-3.5"><use href="#menu"/></svg></button>
        </section>
        <section class="flex h-[22px] shrink-0 border-b border-[#222] bg-[#2e2e2e] text-[#8f8f8f]">
          <button class="border-r border-[#222] px-[7px]">描边</button>
          <button class="flex items-center gap-1 bg-[#484848] pl-[5px] pr-1.5 text-[#e4e4e4]"><svg class="h-2.5 w-1.5"><use href="#updown"/></svg>渐变</button>
          <button class="border-r border-[#222] px-2">透明度</button>
          <button class="ml-auto mr-1" aria-label="渐变菜单"><svg class="h-2.5 w-3.5"><use href="#menu"/></svg></button>
        </section>
      </aside>
    </main>
  </div>

  <!-- Watermark -->
  <svg class="pointer-events-none absolute bottom-5 left-1.5 h-10 w-[340px]" viewBox="0 0 340 40">
    <g fill="#fff" stroke="#141414" stroke-width="10" stroke-linejoin="round" paint-order="stroke">
      <text x="8" y="27" class="text-[24px]">酷课堂出品</text>
      <text x="135" y="27" class="text-[25px]">coolketang.com</text>
    </g>
  </svg>

  <script>
    const NS = "http://www.w3.org/2000/svg";
    const UNIT = 28.35; // one centimetre at 100%

    function add(parent, tag, attrs, text) {
      const el = document.createElementNS(NS, tag);
      for (const key in attrs) el.setAttribute(key, attrs[key]);
      if (text !== undefined) el.textContent = text;
      parent.appendChild(el);
    }

    // Horizontal ruler: labels sit right of the tick
    function drawTop() {
      const ruler = document.getElementById("rulerTop");
      const width = ruler.clientWidth;
      for (let n = -2; 54 + n * UNIT < width; n++) {
        const x = 54 + n * UNIT;
        add(ruler, "path", { d: `M${Math.round(x) + 0.5} 0V16`, stroke: "#777" });
        for (let i = 1; i < 5; i++) {
          add(ruler, "path", { d: `M${Math.round(x + i * UNIT / 5) + 0.5} 12V16`, stroke: "#777" });
        }
        add(ruler, "text", { x: Math.round(x) + 2, y: 12, fill: "#b4b4b4" }, Math.abs(n));
      }
    }

    // Vertical ruler: labels sit above the tick, one digit per line
    function drawLeft() {
      const ruler = document.getElementById("rulerLeft");
      const height = ruler.clientHeight;
      for (let n = 0; n * UNIT < height; n++) {
        const y = 11 + n * UNIT;
        add(ruler, "path", { d: `M0 ${Math.round(y) + 0.5}H16`, stroke: "#777" });
        for (let i = 1; i < 5; i++) {
          add(ruler, "path", { d: `M13 ${Math.round(y - i * UNIT / 5) + 0.5}H16`, stroke: "#777" });
        }
        const digits = String(n).split("").reverse();
        digits.forEach((digit, i) => {
          const base = Math.round(y) - 6 - i * 10;
          if (base < height) add(ruler, "text", { x: 3, y: base, fill: "#b4b4b4" }, digit);
        });
      }
    }

    window.onload = () => {
      drawTop();
      drawLeft();
    };
  </script>
</body>
</html>
